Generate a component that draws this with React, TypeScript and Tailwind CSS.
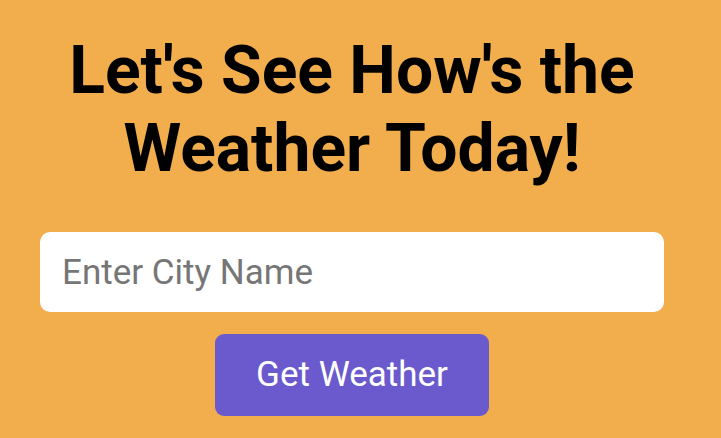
export default function App() {
  return (
    <div className="min-h-[438px] w-full bg-[#F2AE4D] font-['Roboto',sans-serif]">
      <div className="flex w-[704px] flex-col items-center px-[40px] pt-[32px]">
        <h1 className="text-center text-[66px] font-bold leading-[78px] text-black">
          Let's See How's the
          <br />
          Weather Today!
        </h1>
        <input
          type="text"
          placeholder="Enter City Name"
          className="mt-[44px] h-[80px] w-full rounded-[10px] bg-white px-[22px] text-[35px] text-black outline-none placeholder:text-[#767676]"
        />
        <button className="mt-[22px] h-[82px] w-[274px] rounded-[9px] bg-[#6A5ACD] text-[35px] text-white">
          Get Weather
        </button>
      </div>
    </div>
  );
}
